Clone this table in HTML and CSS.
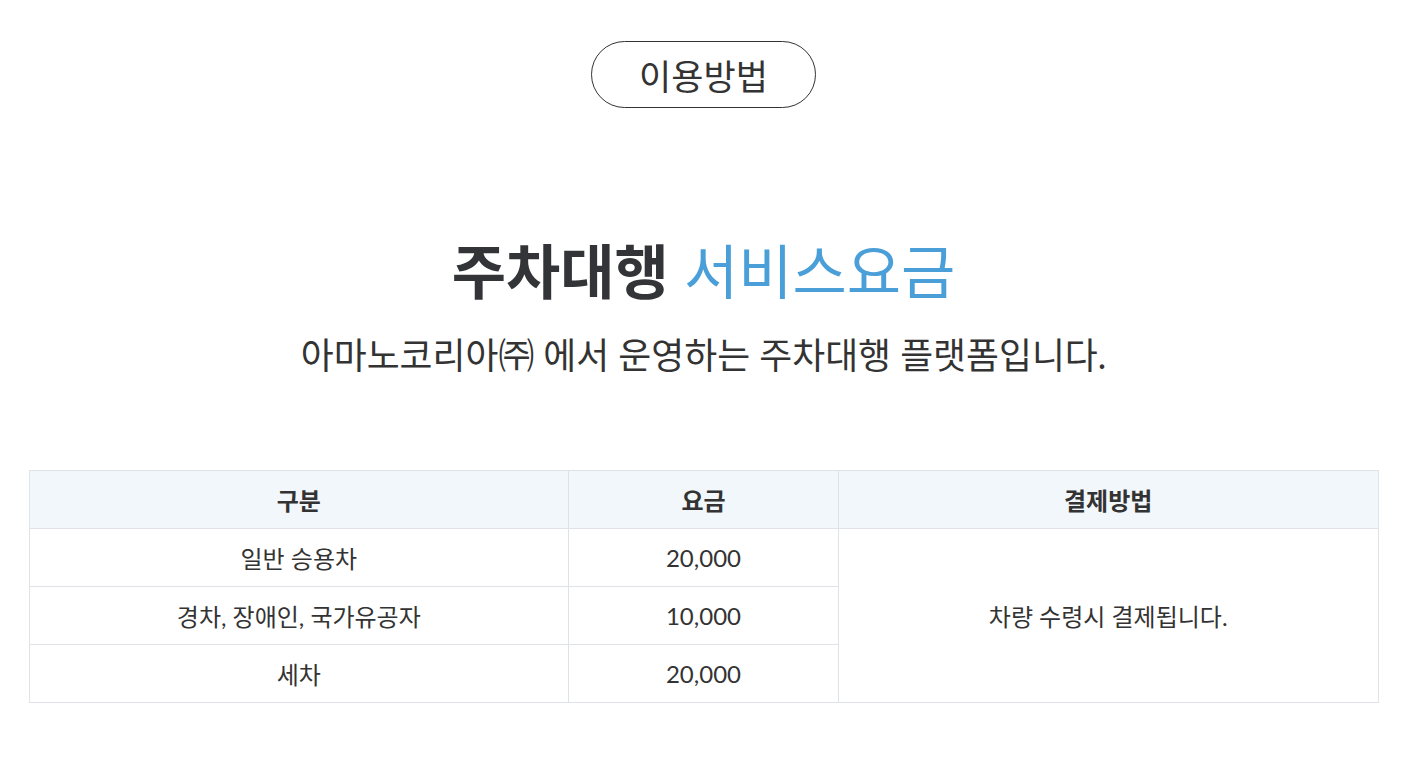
FILE: index.html
```html
<!DOCTYPE html>
<html lang="ko">
<head>
    <meta charset="utf-8">
    <title>이용방법</title>
    <link rel="stylesheet" href="styles.css">
</head>
<body>
    <div class="container">
        <div class="tab-wrap">
            <span class="tab-pill">이용방법</span>
        </div>

        <div class="intro">
            <h2 class="intro-title"><strong>주차대행</strong> <span class="accent">서비스요금</span></h2>
            <p class="intro-desc">아마노코리아㈜ 에서 운영하는 주차대행 플랫폼입니다.</p>
        </div>

        <table class="price-table">
            <colgroup>
                <col class="col-type">
                <col class="col-price">
                <col class="col-pay">
            </colgroup>
            <thead>
                <tr>
                    <th>구분</th>
                    <th>요금</th>
                    <th>결제방법</th>
                </tr>
            </thead>
            <tbody>
                <tr>
                    <td>일반 승용차</td>
                    <td class="num">20,000</td>
                    <td rowspan="3">차량 수령시 결제됩니다.</td>
                </tr>
                <tr>
                    <td>경차, 장애인, 국가유공자</td>
                    <td class="num">10,000</td>
                </tr>
                <tr>
                    <td>세차</td>
                    <td class="num">20,000</td>
                </tr>
            </tbody>
        </table>
    </div>
</body>
</html>
```

FILE: styles.css
```css
body {
    margin: 0;
    padding: 0;
    background: #fff;
    color: #333;
    font-family: Lato, "Noto Sans CJK KR", sans-serif;
}
.container {
    width: 1350px;
    margin: 0 auto;
    padding: 41px 0 0 5px;
}
.tab-wrap {
    display: flex;
    justify-content: center;
}
.tab-pill {
    display: inline-flex;
    align-items: center;
    justify-content: center;
    width: 223px;
    height: 65px;
    border: 1px solid #333;
    border-radius: 34px;
    font-size: 35px;
    color: #333;
}
.intro {
    text-align: center;
    padding-top: 134px;
}
.intro-title {
    margin: 0;
    font-size: 59px;
    font-weight: 400;
    line-height: 60px;
    color: #333438;
}
.intro-title strong {
    font-weight: 700;
}
.accent {
    color: #4a9fd8;
}
.intro-desc {
    margin: 32px 0 0;
    font-size: 35.8px;
    line-height: 44px;
    color: #333;
}
.price-table {
    width: 1350px;
    margin-top: 92px;
    border-collapse: collapse;
    table-layout: fixed;
    font-size: 24px;
}
.col-type { width: 40%; }
.col-price { width: 20%; }
.col-pay { width: 40%; }
.price-table th,
.price-table td {
    height: 57px;
    padding: 0 10px;
    border: 1px solid #dfe2e6;
    text-align: center;
    color: #333;
}
.price-table th {
    background: #f2f7fb;
    font-weight: 700;
}
.price-table td {
    font-weight: 400;
}
```
